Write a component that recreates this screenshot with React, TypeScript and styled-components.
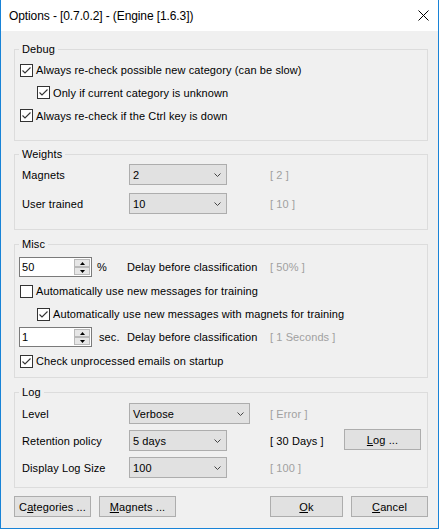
import React from 'react';
import styled, { createGlobalStyle } from 'styled-components';

const Global = createGlobalStyle`
  html, body { margin: 0; padding: 0; background: #f0f0f0; }
  body { font-family: "Liberation Sans", Arial, sans-serif; font-size: 11px; letter-spacing: 0.1px; color: #000; }
  * { box-sizing: border-box; }
`;

const Window = styled.div`
  width: 439px;
  height: 529px;
  border: 1px solid #1883d7;
  border-top: none;
  background: #f0f0f0;
  display: flex;
  flex-direction: column;
`;

const TitleBar = styled.div`
  height: 31px;
  flex: none;
  background: #fff;
  display: flex;
  align-items: center;
  justify-content: space-between;
  padding: 0 9px 0 8px;
  font-size: 12px;
`;

const Title = styled.span`
  line-height: 16px;
  letter-spacing: -0.1px;
`;

const Body = styled.div`
  flex: 1;
  padding: 0 10px 0 13px;
  display: flex;
  flex-direction: column;
`;

const Group = styled.fieldset<{ $mt: number; $pt: number; $pb: number }>`
  flex: none;
  margin: ${(p) => p.$mt}px 0 0 0;
  padding: ${(p) => p.$pt}px 0 ${(p) => p.$pb}px 0;
  border: 1px solid #dcdcdc;
  min-width: 0;
`;

const Legend = styled.legend`
  margin-left: 4px;
  padding: 0 3px;
  line-height: 13px;
  font-size: 11px;
`;

const Stack = styled.div`
  display: flex;
  flex-direction: column;
`;

const CheckRow = styled.div<{ $indent?: boolean; $h: number }>`
  display: flex;
  flex: none;
  align-items: center;
  height: ${(p) => p.$h}px;
  padding-left: ${(p) => (p.$indent ? 22 : 5)}px;
  gap: 3px;
`;

const FormGrid = styled.div<{ $cols: string; $gap: number }>`
  display: grid;
  grid-template-columns: ${(p) => p.$cols};
  grid-auto-rows: 21px;
  row-gap: ${(p) => p.$gap}px;
  align-items: center;
  padding-left: 7px;
`;

const Hint = styled.span<{ $dark?: boolean }>`
  color: ${(p) => (p.$dark ? '#000' : '#a0a0a0')};
  white-space: nowrap;
`;

const ComboBox = styled.div<{ $w: number }>`
  width: ${(p) => p.$w}px;
  height: 21px;
  border: 1px solid #adadad;
  background: #e1e1e1;
  display: flex;
  align-items: center;
  justify-content: space-between;
  padding: 0 5px 0 3px;
`;

const SpinGrid = styled.div<{ $h: number }>`
  display: grid;
  flex: none;
  grid-template-columns: 78px 30px 143px auto;
  align-items: center;
  height: ${(p) => p.$h}px;
  padding-left: 4px;
`;

const Unit = styled.span<{ $shift?: number }>`
  padding-left: ${(p) => p.$shift ?? 0}px;
`;

const Spin = styled.div`
  width: 73px;
  height: 20px;
  border: 1px solid #7a7a7a;
  background: #fff;
  display: flex;
`;

const SpinText = styled.div`
  flex: 1;
  padding-left: 2px;
  line-height: 18px;
`;

const SpinButtons = styled.div`
  width: 17px;
  display: flex;
  flex-direction: column;
  padding: 1px 1px 1px 0;
`;

const SpinBtn = styled.div`
  flex: 1;
  border: 1px solid #b9b9b9;
  background: #e6e6e6;
  display: flex;
  align-items: center;
  justify-content: center;
`;

const Button = styled.div<{ $w: number }>`
  width: ${(p) => p.$w}px;
  height: 21px;
  border: 1px solid #adadad;
  background: #e1e1e1;
  display: flex;
  align-items: center;
  justify-content: center;
  white-space: nowrap;
`;

const LogButton = styled(Button)`
  margin-top: -2px;
`;

const Footer = styled.div`
  display: flex;
  flex: none;
  margin-top: 8px;
  gap: 8px;
`;

const Spacer = styled.div`
  flex: 1;
`;

const CheckBox = ({ checked }: { checked: boolean }) => (
  <svg width="13" height="13" viewBox="0 0 13 13" style={{ flex: 'none' }}>
    <rect x="0.5" y="0.5" width="12" height="12" fill="#fff" stroke="#333" />
    {checked && <polyline points="2.5,6.5 5,9 10.5,3.5" fill="none" stroke="#333" strokeWidth="1.1" />}
  </svg>
);

const Chevron = () => (
  <svg width="7" height="4" viewBox="0 0 7 4">
    <polyline points="0.5,0.5 3.5,3.5 6.5,0.5" fill="none" stroke="#444" strokeWidth="1" />
  </svg>
);

const Arrow = ({ up }: { up?: boolean }) => (
  <svg width="5" height="3" viewBox="0 0 5 3">
    <polygon points={up ? '0,3 5,3 2.5,0' : '0,0 5,0 2.5,3'} fill="#000" />
  </svg>
);

const CloseIcon = () => (
  <svg width="11" height="11" viewBox="0 0 11 11">
    <path d="M0.5 0.5 L10.5 10.5 M10.5 0.5 L0.5 10.5" stroke="#000" strokeWidth="1" fill="none" />
  </svg>
);

const Check = ({ checked, indent, h, children }: { checked: boolean; indent?: boolean; h: number; children: React.ReactNode }) => (
  <CheckRow $indent={indent} $h={h}>
    <CheckBox checked={checked} />
    <span>{children}</span>
  </CheckRow>
);

const Combo = ({ w, value }: { w: number; value: string }) => (
  <ComboBox $w={w}>
    <span>{value}</span>
    <Chevron />
  </ComboBox>
);

const SpinBox = ({ value }: { value: string }) => (
  <Spin>
    <SpinText>{value}</SpinText>
    <SpinButtons>
      <SpinBtn><Arrow up /></SpinBtn>
      <SpinBtn><Arrow /></SpinBtn>
    </SpinButtons>
  </Spin>
);

export default function App() {
  return (
    <>
      <Global />
      <Window>
        <TitleBar>
          <Title>Options - [0.7.0.2] - (Engine [1.6.3])</Title>
          <CloseIcon />
        </TitleBar>
        <Body>
          <Group $mt={12} $pt={3} $pb={13}>
            <Legend>Debug</Legend>
            <Stack>
              <Check checked h={22}>Always re-check possible new category (can be slow)</Check>
              <Check checked indent h={23}>Only if current category is unknown</Check>
              <Check checked h={23}>Always re-check if the Ctrl key is down</Check>
            </Stack>
          </Group>

          <Group $mt={7} $pt={3} $pb={15}>
            <Legend>Weights</Legend>
            <FormGrid $cols="107px 141px auto" $gap={8}>
              <span>Magnets</span>
              <Combo w={98} value="2" />
              <Hint>[ 2 ]</Hint>
              <span>User trained</span>
              <Combo w={98} value="10" />
              <Hint>[ 10 ]</Hint>
            </FormGrid>
          </Group>

          <Group $mt={8} $pt={4} $pb={4}>
            <Legend>Misc</Legend>
            <Stack>
              <SpinGrid $h={24}>
                <SpinBox value="50" />
                <Unit>%</Unit>
                <span>Delay before classification</span>
                <Hint>[ 50% ]</Hint>
              </SpinGrid>
              <Check checked={false} h={24}>Automatically use new messages for training</Check>
              <Check checked indent h={22}>Automatically use new messages with magnets for training</Check>
              <SpinGrid $h={24}>
                <SpinBox value="1" />
                <Unit $shift={2}>sec.</Unit>
                <span>Delay before classification</span>
                <Hint>[ 1 Seconds ]</Hint>
              </SpinGrid>
              <Check checked h={24}>Check unprocessed emails on startup</Check>
            </Stack>
          </Group>

          <Group $mt={8} $pt={4} $pb={9}>
            <Legend>Log</Legend>
            <FormGrid $cols="107px 141px 74px auto" $gap={6}>
              <span>Level</span>
              <Combo w={121} value="Verbose" />
              <Hint>[ Error ]</Hint>
              <span />
              <span>Retention policy</span>
              <Combo w={98} value="5 days" />
              <Hint $dark>[ 30 Days ]</Hint>
              <LogButton $w={77}><span><u>L</u>og ...</span></LogButton>
              <span>Display Log Size</span>
              <Combo w={98} value="100" />
              <Hint>[ 100 ]</Hint>
              <span />
            </FormGrid>
          </Group>

          <Footer>
            <Button $w={77}><span>C<u>a</u>tegories ...</span></Button>
            <Button $w={77}><span><u>M</u>agnets ...</span></Button>
            <Spacer />
            <Button $w={73}><span><u>O</u>k</span></Button>
            <Button $w={77}><span><u>C</u>ancel</span></Button>
          </Footer>
        </Body>
      </Window>
    </>
  );
}
